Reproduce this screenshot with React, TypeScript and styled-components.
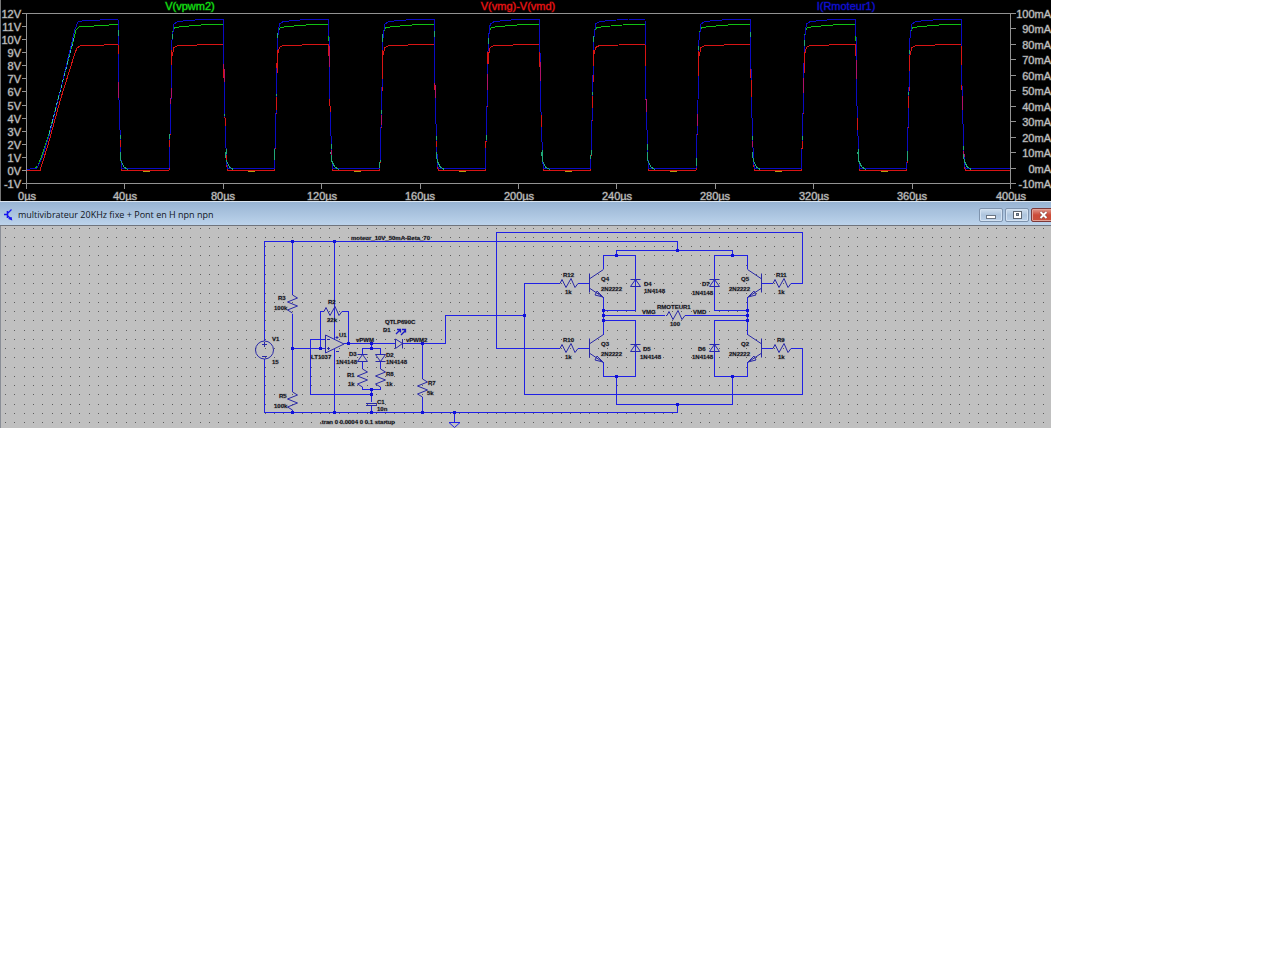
import React from "react";
import styled, { createGlobalStyle } from "styled-components";

const GlobalStyle = createGlobalStyle`
  body {
    margin: 0;
    background: #fff;
    font-family: "Liberation Sans", Arial, sans-serif;
  }
`;

const Page = styled.div`
  display: grid;
  grid-template-columns: minmax(0, 1051fr) 229fr;
`;

const Workspace = styled.main`
  overflow: hidden;
`;

const Drawing = styled.svg`
  display: block;
  width: 100%;
  height: auto;
`;

const ChartDrawing = styled(Drawing)`
  background: #000;
`;

const SheetDrawing = styled(Drawing)`
  background: #c0c0c0;
`;

const AxisText = styled.text`
  font-size: 11px;
  fill: #c0c0c0;
  stroke: #c0c0c0;
  stroke-opacity: 0.4;
`;

const TraceName = styled.text<{ $color: string }>`
  font-size: 11px;
  text-anchor: middle;
  fill: ${(p) => p.$color};
  stroke: ${(p) => p.$color};
  stroke-opacity: 0.4;
`;

const PartText = styled.text`
  font-size: 6px;
  font-weight: bold;
  fill: #101018;
  stroke: #101018;
  stroke-opacity: 0.2;
`;

const TitleBar = styled.header`
  box-sizing: border-box;
  height: 25px;
  display: flex;
  align-items: center;
  padding: 2px 0 0 3px;
  border-top: 1px solid #dce6f0;
  border-bottom: 1px solid #70747c;
  background: linear-gradient(#98b4d3, #bcd3eb);
`;

const Title = styled.h1`
  flex: 1;
  margin: 0 0 0 5px;
  font: 9px "Open Sans", "Segoe UI", sans-serif;
  white-space: nowrap;
  color: #10141c;
`;

const WindowButtons = styled.div`
  display: flex;
  gap: 2px;
`;

const WindowButton = styled.button<{ $close?: boolean }>`
  box-sizing: border-box;
  width: 24px;
  height: 14px;
  padding: 0;
  display: flex;
  align-items: center;
  justify-content: center;
  border: 1px solid ${(p) => (p.$close ? "#7c3838" : "#7e93ad")};
  border-radius: 2px;
  background: ${(p) =>
    p.$close
      ? "linear-gradient(#e0988c, #cc4a38 50%, #c8503c)"
      : "linear-gradient(#cfdfef, #adc4dd 50%, #bcd2ea)"};
  box-shadow: inset 0 0 0 1px ${(p) => (p.$close ? "#e2a297" : "#d3e2f2")};
  margin-right: ${(p) => (p.$close ? "-4px" : "0")};
`;

/* ---------- waveform chart ---------- */

const PERIOD = 105.4;
const GREEN = "#10c010";
const RED = "#d81414";
const BLUE = "#0a0ac4";
const TEAL = "#20a878";
const MAGENTA = "#b0106c";

const pulses = Array.from({ length: 8 }, (_, i) => 169 + i * PERIOD);
const falls = Array.from({ length: 9 }, (_, i) => 118 + i * PERIOD);

function trace(first: string, low: number, rise: number[][], top: number) {
  let d = first;
  falls.forEach((f, i) => {
    d += ` L${f} ${top} L${f + 1} 100 L${f + 3} 160 L${f + 4} ${low}`;
    if (i < pulses.length) {
      const r = pulses[i];
      d += ` L${r} ${low}`;
      rise.forEach(([x, y]) => (d += ` L${r + x} ${y}`));
    }
  });
  return d + ` L1010 ${low}`;
}

const redTrace = trace(
  "M27 170.5 L40 170.5 L48 145 L60 101 L75 53 L77 48 L80 46 L90 45.5",
  170.5,
  [[2, 100], [3, 56], [5, 47.5], [8, 46], [38, 44.5]],
  44.5
);
const greenTrace = trace(
  "M27 169.5 L34 168.5 L38 166 L42 155 L49 134 L62 84 L76 30 L79 27 L88 26.5 L100 25.5",
  170.5,
  [[2, 100], [3, 40], [4, 31], [6, 27.5], [14, 26.5], [38, 24.5]],
  24.5
);
const blueTrace = trace(
  "M27 169.5 L37 168 L42 158 L49 136 L62 84 L75 29 L78 22 L84 20.5 L100 20",
  168.5,
  [[2, 100], [3, 40], [5, 24], [9, 21.5], [20, 20.5], [38, 19]],
  19
);

type Fleck = [number, number, string];
const riseFlecks: Fleck[][] = [
  [[34, 40, TEAL], [50, 65, RED], [88, 104, MAGENTA], [134, 139, TEAL], [140, 147, RED]],
  [[33, 38, TEAL], [50, 68, RED], [94, 96, TEAL], [97, 110, RED], [149, 160, TEAL]],
  [[34, 42, TEAL], [50, 79, RED], [110, 114, TEAL], [115, 125, MAGENTA], [160, 168, TEAL]],
  [[38, 44, TEAL], [52, 64, RED], [74, 90, MAGENTA], [135, 140, TEAL], [141, 148, RED]],
  [[36, 42, TEAL], [50, 66, RED], [92, 95, TEAL], [96, 108, RED], [150, 159, TEAL]],
  [[46, 50, TEAL], [51, 76, RED], [114, 126, MAGENTA], [158, 166, TEAL]],
  [[40, 46, TEAL], [52, 64, RED], [78, 93, MAGENTA], [136, 140, TEAL], [141, 149, RED]],
  [[50, 54, TEAL], [55, 71, RED], [92, 95, TEAL], [96, 108, RED], [151, 161, TEAL]],
];
const fallFlecks: Fleck[][] = [
  [[30, 36, TEAL], [45, 54, RED], [82, 98, MAGENTA], [135, 139, TEAL], [140, 147, RED]],
  [[64, 82, MAGENTA], [114, 116, TEAL], [117, 126, RED], [149, 154, TEAL], [155, 160, RED]],
  [[46, 67, MAGENTA], [99, 112, RED], [144, 149, TEAL], [150, 155, MAGENTA]],
  [[31, 37, TEAL], [83, 98, MAGENTA], [136, 140, TEAL], [141, 147, RED]],
  [[62, 81, MAGENTA], [115, 127, RED], [150, 156, TEAL]],
  [[45, 66, RED], [99, 112, MAGENTA], [144, 150, TEAL]],
  [[32, 37, TEAL], [80, 97, RED], [136, 140, TEAL], [141, 147, MAGENTA]],
  [[60, 79, MAGENTA], [118, 130, RED], [149, 155, TEAL]],
  [[46, 65, RED], [96, 110, MAGENTA], [146, 150, TEAL], [151, 157, MAGENTA]],
];

const riseX = (y: number) => (y > 100 ? (168.5 - y) / 34 : 2 + (100 - y) / 60);
const fallX = (y: number) => (y < 100 ? (y - 20) / 80 : 1 + (y - 100) / 30);

function Chart() {
  const volts = Array.from({ length: 14 }, (_, i) => 12 - i);
  const amps = Array.from({ length: 12 }, (_, i) => 100 - i * 10);
  const times = Array.from({ length: 11 }, (_, i) => i * 40);
  return (
    <ChartDrawing viewBox="0 0 1051 201" role="img" aria-label="Waveforms">
      <path d="M0.5 0V201" stroke="#777" />
      <TraceName x={190} y={10} $color="#14e414">V(vpwm2)</TraceName>
      <TraceName x={518} y={10} $color="#f01414">V(vmg)-V(vmd)</TraceName>
      <TraceName x={846} y={10} $color="#1010d8">I(Rmoteur1)</TraceName>
      <g stroke="#929292" fill="none" shapeRendering="crispEdges">
        <path d="M26.5 13.5H1010.5V183.5H26.5Z" />
        {volts.map((v, i) => (
          <path key={v} d={`M22 ${13.5 + i * 13.077}H27`} />
        ))}
        {amps.map((a, i) => (
          <path key={a} d={`M1010 ${13.5 + i * 15.4545}H1016`} />
        ))}
        {times.map((t, i) => (
          <path key={t} d={`M${26.5 + i * 98.4} 183V189`} />
        ))}
      </g>
      <g fill="none" shapeRendering="crispEdges">
        <path d={greenTrace} stroke={GREEN} />
        <path d={redTrace} stroke={RED} />
        <path d={blueTrace} stroke={BLUE} />
        <path d="M49 134L62 84L74 38" stroke="#30b8c8" strokeDasharray="3 3" />
        {falls.map((f, i) => (
          <g key={f}>
            <path d={`M${f + 2} 152L${f + 3} 161L${f + 6} 167L${f + 10} 169.5`} stroke={TEAL} />
            {i < 8 && <path d={`M${f + 25} 171.5H${f + 32}`} stroke="#b0a010" />}
            {fallFlecks[i].map(([a, b, c]) => (
              <path key={a} d={`M${f + fallX(a)} ${a}L${f + fallX(b)} ${b}`} stroke={c} />
            ))}
          </g>
        ))}
        {pulses.map((r, i) =>
          riseFlecks[i].map(([a, b, c]) => (
            <path key={`${i}-${a}`} d={`M${r + riseX(a)} ${a}L${r + riseX(b)} ${b}`} stroke={c} />
          ))
        )}
      </g>
      {volts.map((v, i) => (
        <AxisText key={v} x={21} y={18 + Math.round(i * 13.077)} textAnchor="end">
          {v}V
        </AxisText>
      ))}
      {amps.map((a, i) => (
        <AxisText key={a} x={1051} y={18 + Math.round(i * 15.4545)} textAnchor="end">
          {a}mA
        </AxisText>
      ))}
      {times.map((t, i) => (
        <AxisText key={t} x={Math.round(26.5 + i * 98.4)} y={200} textAnchor="middle">
          {t}µs
        </AxisText>
      ))}
    </ChartDrawing>
  );
}

/* ---------- schematic ---------- */

const STEP = 9.264;
const gridDots = (() => {
  let d = "";
  for (let r = 0; r < 22; r++) {
    const y = Math.round(227.7 + r * STEP);
    for (let c = 0; c < 114; c++) {
      const x = Math.floor(496.7 + (c - 53) * STEP);
      if (x > 1) d += `M${x} ${y}.5h1`;
    }
  }
  return d;
})();

const wires = [
  "M264.5 341V241.5H677.5V250.5M264.5 359V412.5H677.5V404.5",
  "M292.5 241V295M292.5 314V391M292.5 410V412",
  "M334.5 241V340M334.5 349V412",
  "M292 348.5H325M320.5 348V311.5H323M342 311.5H348.5V343",
  "M325 339.5H310.5V394.5H371M344 343.5H395",
  "M371.5 343V348.5M362.5 354V348.5H380.5V354M362.5 361V368M380.5 361V368",
  "M362.5 387V389.5H380.5V387M371.5 389V402M371.5 406V412",
  "M403 343.5H445.5V315.5H524M422.5 343V378M422.5 397V412",
  "M454.5 412V422",
  "M589 348.5H578M559 348.5H496.5V232.5H802.5V283.5H791",
  "M559 283.5H524.5V394.5H802.5V348.5H791M578 283.5H589",
  "M772 283.5H761M772 348.5H761",
  "M616.5 255V250.5H732.5V255M616.5 376V404.5H732.5V376",
  "M603.5 269V255.5H635.5V310.5H603.5M603.5 297V335M635.5 376.5V320.5H603.5M603.5 362V376.5H636",
  "M747.5 269V255.5H714.5V310.5H747.5M747.5 297V335M714.5 376.5V320.5H747.5M747.5 362V376.5H714",
  "M603 315.5H665M685 315.5H748",
];

const junctions = [
  [292, 241], [334, 241], [677, 250], [616, 255], [732, 255],
  [292, 348], [320, 348], [348, 343], [371, 343], [371, 348], [371, 389], [371, 394],
  [422, 343], [524, 315],
  [292, 412], [334, 412], [371, 412], [422, 412], [454, 412],
  [603, 310], [603, 315], [603, 320], [747, 310], [747, 315], [747, 320],
  [616, 376], [732, 376], [677, 404],
];

const Resistor = ({ x, y, vertical }: { x: number; y: number; vertical?: boolean }) => (
  <path
    d={
      vertical
        ? `M${x} ${y}l0 1l5 3l-10 4l10 4l-10 4l5 3`
        : `M${x} ${y}l1 0l2 -4l4 8l5 -9l4 9l3 -4`
    }
  />
);

const Diode = ({ x, y, down }: { x: number; y: number; down?: boolean }) => (
  <path
    d={
      down
        ? `M${x - 5} ${y}h10l-5 7zM${x - 5} ${y + 7}h10`
        : `M${x - 5} ${y + 7}h10l-5 -7zM${x - 5} ${y}h10`
    }
  />
);

const Transistor = ({ y, flip }: { y: number; flip?: boolean }) => (
  <g transform={flip ? "translate(1351 0) scale(-1 1)" : undefined}>
    <path
      d={`M589.5 ${y - 10}v19M590 ${y - 5}L603.5 ${y - 14}M590 ${y + 5}L603.5 ${y + 14}M603 ${y + 13.5}l-8 -2l2 -4z`}
    />
  </g>
);

const labels: [string, number, number][] = [
  ["moteur_10V_50mA-Beta_70", 351, 240],
  ["R3", 278, 300], ["100k", 274, 310],
  ["R2", 328, 304], ["22k", 327, 322],
  ["V1", 272, 341], ["15", 272, 364],
  ["U1", 339, 337], ["LT1037", 311, 359],
  ["QTLP690C", 385, 324], ["D1", 383, 332],
  ["vPWM", 356, 342], ["vPWM2", 406, 342],
  ["D3", 349, 356], ["1N4148", 336, 364],
  ["D2", 386, 357], ["1N4148", 386, 364],
  ["R1", 347, 377], ["1k", 348, 386],
  ["R8", 386, 376], ["1k", 386, 386],
  ["R5", 279, 398], ["100k", 274, 408],
  ["R7", 428, 385], ["5k", 427, 395],
  ["C1", 377, 404], ["10n", 377, 411],
  [".tran 0 0.0004 0 0.1 startup", 320, 424],
  ["R12", 563, 277], ["1k", 565, 294],
  ["Q4", 601, 281], ["2N2222", 601, 291],
  ["D4", 644, 286], ["1N4148", 644, 293],
  ["R10", 563, 342], ["1k", 565, 359],
  ["Q3", 601, 346], ["2N2222", 601, 356],
  ["D5", 643, 351], ["1N4148", 640, 359],
  ["VMG", 642, 314], ["RMOTEUR1", 657, 309], ["VMD", 693, 314], ["100", 670, 326],
  ["D7", 702, 286], ["1N4148", 692, 295],
  ["Q5", 741, 281], ["2N2222", 729, 291],
  ["R11", 776, 277], ["1k", 778, 294],
  ["D6", 698, 351], ["1N4148", 692, 359],
  ["Q2", 741, 346], ["2N2222", 729, 356],
  ["R9", 777, 342], ["1k", 778, 359],
];

function Schematic() {
  return (
    <SheetDrawing viewBox="0 226 1051 202" role="img" aria-label="Schematic">
      <path d="M0.5 226V428" stroke="#8a8e96" />
      <path d={gridDots} stroke="#5c5c5c" shapeRendering="crispEdges" />
      <g fill="none" stroke="#2020e4" shapeRendering="crispEdges">
        {wires.map((d) => (
          <path key={d} d={d} />
        ))}
      </g>
      <g fill="#1010d8">
        {junctions.map(([x, y]) => (
          <rect key={`${x}-${y}`} x={x - 1} y={y - 1} width={3} height={3} />
        ))}
      </g>
      <g fill="none" stroke="#2828a8">
        <circle cx={264.5} cy={350} r={9} />
        <path d="M264.5 342v5M262 344.5h5M262 356.5h5" />
        <Resistor x={292.5} y={294} vertical />
        <Resistor x={292.5} y={391} vertical />
        <Resistor x={362.5} y={368} vertical />
        <Resistor x={380.5} y={368} vertical />
        <Resistor x={422.5} y={378} vertical />
        <Resistor x={323} y={311.5} />
        <Resistor x={559} y={283.5} />
        <Resistor x={559} y={348.5} />
        <Resistor x={666} y={315.5} />
        <Resistor x={772} y={283.5} />
        <Resistor x={772} y={348.5} />
        <path d="M325.5 335V353L344 344ZM327 339.5h3M327 348.5h3M328.5 347v3M337 336v3M335.5 337.5h3M336 351.5h3" />
        <Diode x={362.5} y={354.5} />
        <Diode x={380.5} y={354.5} down />
        <Diode x={635.5} y={279.5} />
        <Diode x={635.5} y={344.5} />
        <Diode x={714.5} y={279.5} />
        <Diode x={714.5} y={344.5} />
        <path d="M395.5 339V348.5L402.5 343.5ZM402.5 339V348.5" />
        <path d="M396 334l4 -4M401 335l4 -4M397 329.5h3.5v3M402 329.5h3.5v3" stroke="#1818c8" strokeWidth="1.3" />
        <path d="M366 403.5h11M366 405.5h11" />
        <path d="M449 422.5h11l-5.5 5z" stroke="#2020e4" />
        <Transistor y={283.5} />
        <Transistor y={348.5} />
        <Transistor y={283.5} flip />
        <Transistor y={348.5} flip />
      </g>
      {labels.map(([text, x, y]) => (
        <PartText key={`${x}-${y}`} x={x} y={y}>
          {text}
        </PartText>
      ))}
    </SheetDrawing>
  );
}

export default function App() {
  return (
    <>
      <GlobalStyle />
      <Page>
        <Workspace>
          <Chart />
          <TitleBar>
            <svg width="10" height="13" viewBox="0 0 10 13" fill="none" stroke="#1414f0" aria-hidden="true">
              <path d="M1 6.5H4M4.5 3V10" strokeWidth="1.6" />
              <path d="M5 5L8.5 1.5M5 8L8.5 11.5M5.5 10.5L8.5 11.5L8 9" strokeWidth="1.2" />
            </svg>
            <Title>multivibrateur 20KHz fixe + Pont en H npn npn</Title>
            <WindowButtons>
              <WindowButton aria-label="Minimize">
                <svg width="10" height="8" aria-hidden="true">
                  <rect x="0.5" y="4.5" width="9" height="3" fill="#fff" stroke="#6a7684" />
                </svg>
              </WindowButton>
              <WindowButton aria-label="Restore">
                <svg width="9" height="8" aria-hidden="true">
                  <rect x="0.5" y="0.5" width="8" height="7" fill="#fff" stroke="#5c6672" />
                  <rect x="3.5" y="2.5" width="2" height="2" fill="#8ea4bc" stroke="#5c6672" />
                </svg>
              </WindowButton>
              <WindowButton $close aria-label="Close">
                <svg width="9" height="8" aria-hidden="true">
                  <path d="M1.5 1L7.5 7M7.5 1L1.5 7" stroke="#7a3a38" strokeWidth="3" />
                  <path d="M1.5 1L7.5 7M7.5 1L1.5 7" stroke="#fff" strokeWidth="2" />
                </svg>
              </WindowButton>
            </WindowButtons>
          </TitleBar>
          <Schematic />
        </Workspace>
      </Page>
    </>
  );
}
